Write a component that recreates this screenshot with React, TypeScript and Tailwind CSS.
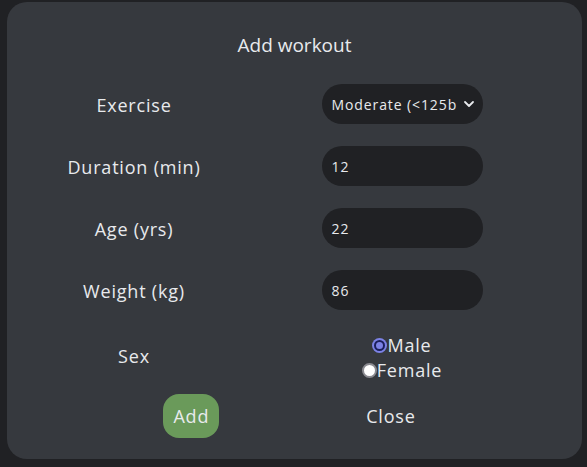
import React from "react";

const body = { fontFamily: "'Open Sans', 'Noto Sans', sans-serif" };

function Label({ children, cls = "pt-[3px]" }: { children: React.ReactNode; cls?: string }) {
  return (
    <div
      className={"flex items-center justify-center text-[18px] tracking-[0.8px] text-[#e8eaed] " + cls}
      style={body}
    >
      {children}
    </div>
  );
}

function Field({ value }: { value: string }) {
  return (
    <div className="flex justify-center">
      <div
        className="w-[161px] h-[40px] rounded-full bg-[#202124] flex items-center pl-[10px] text-[14px] tracking-[0.9px] text-[#e8eaed]"
        style={body}
      >
        {value}
      </div>
    </div>
  );
}

export default function App() {
  return (
    <div className="w-[587px] h-[467px] bg-[#202124] pt-[2px] pl-[7px] overflow-hidden">
      <div className="w-[575px] h-[457px] bg-[#36393e] rounded-[20px] flex flex-col">
        <div
          className="mt-[31px] h-[24px] leading-[24px] text-center text-[19px] text-[#e8eaed]"
          style={{ fontFamily: "'Open Sans', 'Noto Sans', sans-serif" }}
        >
          Add workout
        </div>
        <div className="mt-[27px] grid grid-cols-[254px_282px] gap-y-[22px]">
          <Label>Exercise</Label>
          <div className="flex justify-center">
            <div
              className="w-[161px] h-[40px] rounded-full bg-[#202124] flex items-center pl-[10px] pr-[8px] text-[14px] tracking-[0.9px] text-[#e8eaed] overflow-hidden"
              style={body}
            >
              <span className="flex-1 whitespace-nowrap overflow-hidden">Moderate (&lt;125b</span>
              <svg width="12" height="12" viewBox="0 0 12 12" className="ml-[2px] shrink-0">
                <path d="M2 4 L6 8 L10 4" fill="none" stroke="#e8eaed" strokeWidth="1.8" strokeLinecap="round" strokeLinejoin="round" />
              </svg>
            </div>
          </div>
          <Label>Duration (min)</Label>
          <Field value="12" />
          <Label>Age (yrs)</Label>
          <Field value="22" />
          <Label>Weight (kg)</Label>
          <Field value="86" />
        </div>
        <div className="mt-[23px] grid grid-cols-[254px_282px]">
          <Label cls="pb-[4px]">Sex</Label>
          <div
            className="flex flex-col items-center text-[18px] leading-[25px] tracking-[0.8px] text-[#e8eaed]"
            style={body}
          >
            <div className="flex items-center">
              <span className="w-[15px] h-[15px] rounded-full bg-[#7c82e6] flex items-center justify-center">
                <span className="w-[11px] h-[11px] rounded-full border-[2px] border-[#1b1f5c] bg-[#7c82e6]" />
              </span>
              <span>Male</span>
            </div>
            <div className="flex items-center">
              <span className="w-[15px] h-[15px] rounded-full bg-white border-[2px] border-[#8a8a90]" />
              <span>Female</span>
            </div>
          </div>
        </div>
        <div className="mt-[11px] flex justify-center gap-[137px]">
          <button
            className="h-[44px] px-[10px] rounded-[16px] bg-[#6a9a5a] text-[18px] tracking-[0.8px] text-[#e8eaed]"
            style={body}
          >
            Add
          </button>
          <button className="h-[44px] px-[10px] text-[18px] tracking-[0.8px] text-[#e8eaed]" style={body}>
            Close
          </button>
        </div>
      </div>
    </div>
  );
}
